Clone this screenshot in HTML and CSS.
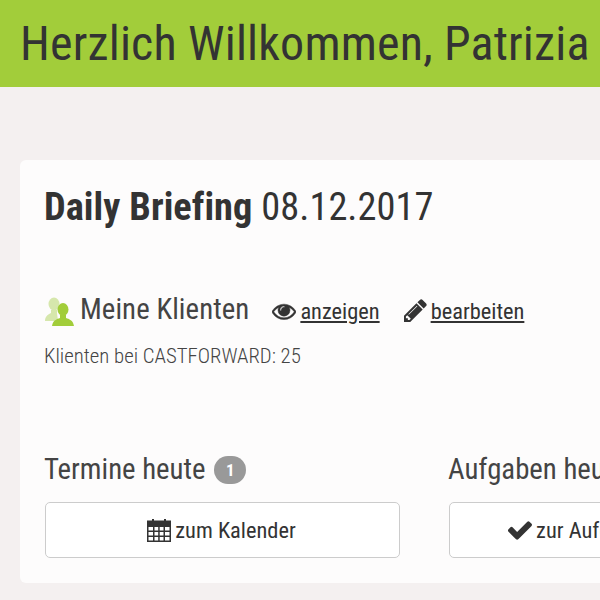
FILE: index.html
```html
<!DOCTYPE html>
<html lang="de">
<head>
    <meta charset="UTF-8">
    <title>Daily Briefing</title>
    <link rel="stylesheet" href="styles.css">
</head>
<body>
<div class="top">
    <h1>Herzlich Willkommen, Patrizia</h1>
</div>
<div class="card">
    <h2><b>Daily Briefing</b> 08.12.2017</h2>
    <div class="clients">
        <svg class="people" width="32" height="32" viewBox="0 0 32 32">
            <g fill="#d6e7ac">
                <ellipse cx="10" cy="10" rx="5.500" ry="6.500"/>
                <path d="M7 16h6v3l1 8H1c0-4 2-6 6-8z"/>
            </g>
            <g fill="#a2cd3a">
                <ellipse cx="19" cy="15.500" rx="5.500" ry="6.500"/>
                <path d="M16 21h6v3c3 1 7 2 8 8H8c1-6 5-7 8-8z"/>
            </g>
        </svg>
        <span class="clients-title">Meine Klienten</span>
        <a class="link" href="#">
            <svg class="eye" width="24" height="24" viewBox="0 0 1792 1792"><path d="M1664 960q-152-236-381-353 61 104 61 225 0 185-131.500 316.500t-316.500 131.500-316.500-131.500-131.500-316.500q0-121 61-225-229 117-381 353 133 205 333.500 326.500t434.500 121.500 434.500-121.500 333.500-326.500zm-720-384q0-20-14-34t-34-14q-125 0-214.500 89.500t-89.500 214.500q0 20 14 34t34 14 34-14 14-34q0-86 61-147t147-61q20 0 34-14t14-34zm848 384q0 34-20 69-140 230-376.500 368.500t-499.500 138.500-499.500-139-376.500-368q-20-35-20-69t20-69q140-229 376.500-368t499.500-139 499.500 139 376.500 368q20 35 20 69z"/></svg>
            <u>anzeigen</u>
        </a>
        <a class="link" href="#">
            <svg class="pencil" width="23" height="23" viewBox="128 128 1536 1536"><path d="M491 1536l91-91-235-235-91 91v107h128v128h107zm523-928q0-22-22-22-10 0-17 7l-542 542q-7 7-7 17 0 22 22 22 10 0 17-7l542-542q7-7 7-17zm-54-192l416 416-832 832h-416v-416zm683 96q0 53-37 90l-166 166-416-416 166-165q36-38 90-38 53 0 91 38l235 234q37 39 37 91z"/></svg>
            <u>bearbeiten</u>
        </a>
    </div>
    <p class="count">Klienten bei CASTFORWARD: 25</p>
    <div class="cols">
        <div class="col">
            <h3>Termine heute <span class="badge">1</span></h3>
            <a class="btn" href="#">
                <svg class="cal" width="24" height="23" viewBox="0 0 24 23"><path fill-rule="evenodd" d="M5 0h2v1.500h10V0h2v1.500h5V23H0V1.500h5zM1.500 8v3.500H6V8zm6 0v3.500h3.700V8zm5.200 0v3.500h3.800V8zM18 8v3.500h4.500V8zM1.500 13v3.500H6V13zm6 0v3.500h3.700V13zm5.200 0v3.500h3.800V13zM18 13v3.500h4.500V13zM1.500 18v3.500H6V18zm6 0v3.500h3.700V18zm5.200 0v3.500h3.800V18zM18 18v3.500h4.500V18z"/></svg>
                zum Kalender
            </a>
        </div>
        <div class="col">
            <h3>Aufgaben heute <span class="badge">0</span></h3>
            <a class="btn" href="#">
                <svg class="check" width="24" height="19" viewBox="128 330 1543 1200"><path d="M1671 566q0 40-28 68l-724 724-136 136q-28 28-68 28t-68-28l-136-136-362-362q-28-28-28-68t28-68l136-136q28-28 68-28t68 28l294 295 656-657q28-28 68-28t68 28l136 136q28 28 28 68z"/></svg>
                zur Aufgaben-Übersicht
            </a>
        </div>
    </div>
</div>
</body>
</html>
```

FILE: styles.css
```css
body, h1, h2, h3, p {
    margin: 0;
    padding: 0;
}

html, body {
    height: 600px;
    overflow: hidden;
}

body {
    width: 985px;
    background: #f4f0f0;
    color: #444;
    font-family: "Roboto", "Liberation Sans", sans-serif;
    font-stretch: 75%;
}

svg {
    fill: #333;
    flex: none;
}

.top {
    background: #a2cd3a;
    height: 87px;
    padding-left: 20px;
    display: flex;
    align-items: center;
}

h1 {
    font-size: 48px;
    font-weight: 400;
    letter-spacing: 0.180px;
    color: #333;
}

.card {
    margin: 73px 0 0 20px;
    height: 423px;
    padding: 25px;
    background: #fdfcfc;
    border-radius: 6px;
    box-sizing: border-box;
}

h2 {
    margin-left: -1px;
    font-size: 38.400px;
    font-weight: 400;
    line-height: 44px;
    letter-spacing: 0.040px;
    color: #333;
}

.clients {
    margin-top: 64px;
    display: flex;
    align-items: center;
    height: 32px;
}

.people {
    margin: 2px 4px 0 -1px;
}

.clients-title {
    font-size: 28.800px;
    letter-spacing: 0.080px;
    margin-right: 23px;
}

.link {
    color: #333;
    font-size: 22.400px;
    text-decoration: none;
    display: flex;
    align-items: center;
    gap: 4px;
    margin: 3px 24px 0 0;
}

.eye path {
    stroke: #333;
    stroke-width: 36;
}

.count {
    margin: 19px 0 0 -1px;
    font-size: 20.800px;
    font-weight: 300;
    color: #444;
}

.cols {
    margin-top: 84px;
    display: flex;
    gap: 49px;
}

.col {
    width: 355px;
    flex: none;
}

h3 {
    margin-left: -1px;
    font-size: 28.800px;
    font-weight: 400;
    height: 50px;
}

.badge {
    display: inline-block;
    width: 32px;
    height: 28px;
    margin-left: 2px;
    line-height: 28px;
    border-radius: 14px;
    background: #999;
    color: #fff;
    font-size: 17px;
    font-weight: 700;
    text-align: center;
    vertical-align: 3px;
}

.btn {
    display: flex;
    justify-content: center;
    align-items: center;
    gap: 4px;
    height: 56px;
    padding-right: 2px;
    box-sizing: border-box;
    background: #fff;
    border: 1px solid #ccc;
    border-radius: 5px;
    color: #333;
    font-size: 22.400px;
    text-decoration: none;
}
```
